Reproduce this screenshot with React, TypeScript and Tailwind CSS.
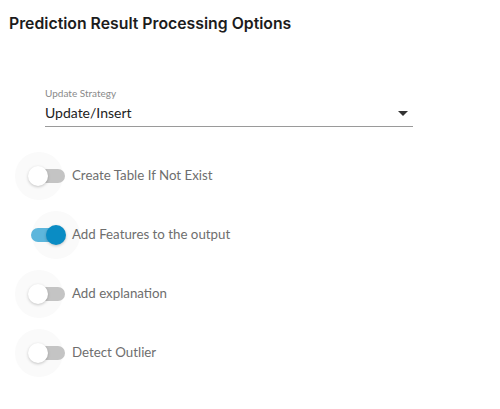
import React, { useState } from 'react'

interface ToggleRowProps {
  label: string
  checked: boolean
  onChange: () => void
}

const ToggleRow: React.FC<ToggleRowProps> = ({ label, checked, onChange }) => {
  return (
    <div className="flex h-[59px] items-center">
      <button
        type="button"
        onClick={onChange}
        className="relative ml-[31px] h-[14px] w-[34px] shrink-0"
      >
        <span
          className={`absolute top-1/2 h-[48px] w-[48px] -translate-y-1/2 rounded-full bg-[#fafafa] ${
            checked ? 'left-[1px]' : 'left-[-16px]'
          }`}
        />
        <span
          className={`absolute inset-0 rounded-full ${
            checked ? 'bg-[#5db6dc]' : 'bg-[#c4c4c4]'
          }`}
        />
        <span
          className={`absolute top-1/2 h-[20px] w-[20px] -translate-y-1/2 rounded-full shadow-[0_1px_3px_rgba(0,0,0,0.22)] ${
            checked ? 'left-[15px] bg-[#0a8cc4]' : 'left-[-3px] bg-white'
          }`}
        />
      </button>
      <span className="relative z-10 ml-[7px] text-[13.3px] text-[#6e6e6e]">
        {label}
      </span>
    </div>
  )
}

export default function App() {
  const [options, setOptions] = useState([
    { label: 'Create Table If Not Exist', checked: false },
    { label: 'Add Features to the output', checked: true },
    { label: 'Add explanation', checked: false },
    { label: 'Detect Outlier', checked: false },
  ])

  const toggle = (index: number) =>
    setOptions((prev) =>
      prev.map((o, i) => (i === index ? { ...o, checked: !o.checked } : o))
    )

  return (
    <div className="h-[409px] w-[500px] bg-white font-['Lato',sans-serif]">
      <h2 className="pl-[9px] pt-3 font-['Inter',sans-serif] text-[15.8px] font-semibold leading-6 text-[#1c1c1c]">
        Prediction Result Processing Options
      </h2>

      <div className="ml-[45px] mt-[50px] w-[368px] border-b border-[#9a9a9a] pb-[3px]">
        <div className="text-[10px] leading-[14px] text-[#8a8a8a]">
          Update Strategy
        </div>
        <div className="mt-[3px] flex items-center justify-between">
          <span className="text-[14px] leading-5 text-[#222]">Update/Insert</span>
          <svg width="10" height="5" viewBox="0 0 10 5" className="mr-[5px]">
            <path d="M0 0h10L5 5z" fill="#333" />
          </svg>
        </div>
      </div>

      <div className="mt-[19px]">
        {options.map((o, i) => (
          <ToggleRow
            key={o.label}
            label={o.label}
            checked={o.checked}
            onChange={() => toggle(i)}
          />
        ))}
      </div>
    </div>
  )
}
